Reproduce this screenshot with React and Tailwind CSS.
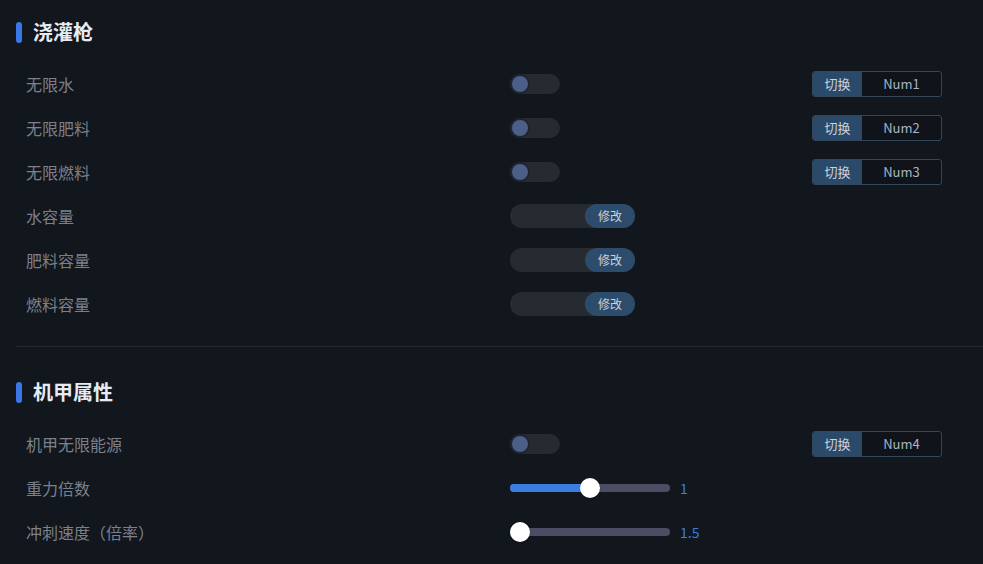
import React from "react";

const font = { fontFamily: '"Noto Sans CJK SC", "Noto Sans", sans-serif' };

function SectionTitle({ children }) {
  return (
    <div className="flex items-center h-6 gap-[11px]">
      <span className="w-[6px] h-[21px] rounded-full bg-[#3b78e7]" />
      <h2 className="text-[20px] font-bold text-[#e6ebf2] leading-none">
        {children}
      </h2>
    </div>
  );
}

function Toggle() {
  return (
    <div className="w-[50px] h-[20px] rounded-full bg-[#262a31] flex items-center px-[2px]">
      <span className="w-[16px] h-[16px] rounded-full bg-[#4b5f88] ring-2 ring-[#1f2530]" />
    </div>
  );
}

function Modify() {
  return (
    <div className="w-[125px] h-[24px] rounded-full bg-[#262a31] flex justify-end">
      <button className="w-[50px] h-full rounded-full bg-[#2d4c6b] text-[12px] text-[#c9d2de]">
        修改
      </button>
    </div>
  );
}

function KeyBind({ k }) {
  return (
    <div className="w-[130px] h-[26px] flex rounded-[3px] border border-[#34465c] bg-[#10141a] overflow-hidden">
      <span className="w-[49px] bg-[#2b4a69] text-[13px] text-[#c9d2de] flex items-center justify-center">
        切换
      </span>
      <span className="flex-1 text-[13px] text-[#a9b4c6] flex items-center justify-center">
        {k}
      </span>
    </div>
  );
}

function Slider({ pct, value }) {
  return (
    <div className="flex items-center gap-[10px]">
      <div className="relative w-[160px] h-[20px] flex items-center">
        <div className="w-full h-[8px] rounded-full bg-[#4a4d63]" />
        <div
          className="absolute left-0 h-[8px] rounded-full bg-[#3b7de0]"
          style={{ width: `${pct * 140 + 10}px` }}
        />
        <span
          className="absolute top-0 w-[20px] h-[20px] rounded-full bg-white shadow"
          style={{ left: `${pct * 140}px` }}
        />
      </div>
      <span className="text-[14px] text-[#3b7de0]">{value}</span>
    </div>
  );
}

function Row({ label, control, keyName }) {
  return (
    <div className="flex items-center h-11">
      <span className="w-[494px] pl-[10px] text-[16px] text-[#7b818c]">
        {label}
      </span>
      <div className="w-[302px]">{control}</div>
      {keyName && <KeyBind k={keyName} />}
    </div>
  );
}

export default function App() {
  return (
    <div className="w-[983px] h-[564px] bg-[#12161d] pl-4 overflow-hidden" style={font}>
      <section className="pt-5">
        <SectionTitle>浇灌枪</SectionTitle>
        <div className="mt-[18px]">
          <Row label="无限水" control={<Toggle />} keyName="Num1" />
          <Row label="无限肥料" control={<Toggle />} keyName="Num2" />
          <Row label="无限燃料" control={<Toggle />} keyName="Num3" />
          <Row label="水容量" control={<Modify />} />
          <Row label="肥料容量" control={<Modify />} />
          <Row label="燃料容量" control={<Modify />} />
        </div>
      </section>
      <div className="mt-5 h-px bg-[#222730]" />
      <section className="pt-[33px]">
        <SectionTitle>机甲属性</SectionTitle>
        <div className="mt-[18px]">
          <Row label="机甲无限能源" control={<Toggle />} keyName="Num4" />
          <Row label="重力倍数" control={<Slider pct={0.5} value="1" />} />
          <Row label="冲刺速度（倍率）" control={<Slider pct={0} value="1.5" />} />
        </div>
      </section>
    </div>
  );
}
